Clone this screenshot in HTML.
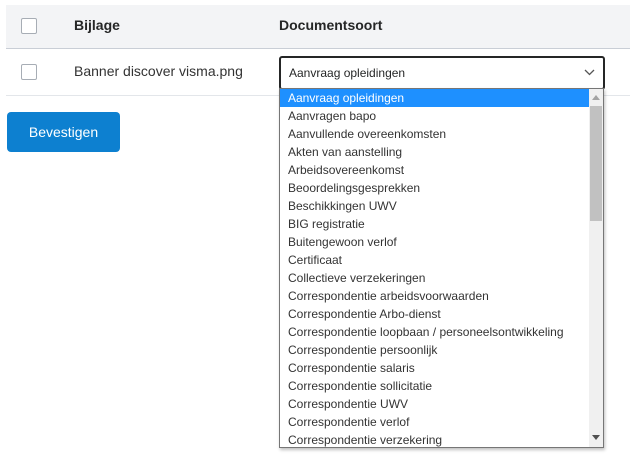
<!DOCTYPE html>
<html><head><style>
body{margin:0;width:630px;height:462px;background:#fff;font-family:"Liberation Sans",sans-serif;position:relative;overflow:hidden;color:#252626}
.hdr{position:absolute;left:6px;top:5px;width:624px;height:43px;background:#f3f4f6;border-bottom:1px solid #c9ced6}
.cb{position:absolute;width:14px;height:14px;border:1px solid #a7adb5;border-radius:2px;background:#fff}
.t{position:absolute;white-space:nowrap}
.rowline{position:absolute;left:6px;top:95px;width:624px;height:1px;background:#e3e6ea}
.btn{position:absolute;left:7px;top:112px;width:113px;height:40px;background:#0d80d0;border-radius:4px;color:#fff;font-size:14px;line-height:40px;text-align:center}
.sel{position:absolute;left:279px;top:56px;width:322px;height:30px;border:2px solid #252626;border-radius:3px;background:#fff;font-size:12px;line-height:30px}
.list{position:absolute;left:279px;top:88px;width:325px;height:360px;border:1px solid #767676;box-sizing:border-box;background:#fff;box-shadow:1px 2px 3px rgba(0,0,0,.25);font-size:12px}
.it{height:18px;line-height:18px;padding-left:8px;white-space:nowrap;color:#333;width:302px}
.it.a{background:#1e90ff;color:#fff}
.sb{position:absolute;right:0;top:0;width:14px;height:358px;background:#f0f0f0}
.th{position:absolute;left:1px;top:17px;width:12px;height:115px;background:#c1c1c1}
</style></head><body>
<div class="hdr"></div>
<div class="cb" style="left:21px;top:18px"></div>
<div class="t" style="left:74px;top:17px;font-weight:bold;font-size:14px">Bijlage</div>
<div class="t" style="left:279px;top:17px;font-weight:bold;font-size:14px">Documentsoort</div>
<div class="cb" style="left:21px;top:64px"></div>
<div class="t" style="left:74px;top:63px;font-size:14px;color:#333">Banner discover visma.png</div>
<div class="rowline"></div>
<div class="sel"><span style="padding-left:8px">Aanvraag opleidingen</span>
<svg style="position:absolute;right:8px;top:11px" width="11" height="7" viewBox="0 0 11 7"><path d="M1 1l4.5 4.5L10 1" fill="none" stroke="#555" stroke-width="1.3"/></svg></div>
<div class="btn">Bevestigen</div>
<div class="list">
<div class="it a">Aanvraag opleidingen</div>
<div class="it">Aanvragen bapo</div>
<div class="it">Aanvullende overeenkomsten</div>
<div class="it">Akten van aanstelling</div>
<div class="it">Arbeidsovereenkomst</div>
<div class="it">Beoordelingsgesprekken</div>
<div class="it">Beschikkingen UWV</div>
<div class="it">BIG registratie</div>
<div class="it">Buitengewoon verlof</div>
<div class="it">Certificaat</div>
<div class="it">Collectieve verzekeringen</div>
<div class="it">Correspondentie arbeidsvoorwaarden</div>
<div class="it">Correspondentie Arbo-dienst</div>
<div class="it">Correspondentie loopbaan / personeelsontwikkeling</div>
<div class="it">Correspondentie persoonlijk</div>
<div class="it">Correspondentie salaris</div>
<div class="it">Correspondentie sollicitatie</div>
<div class="it">Correspondentie UWV</div>
<div class="it">Correspondentie verlof</div>
<div class="it">Correspondentie verzekering</div>
<div class="sb"><svg style="position:absolute;left:3px;top:6px" width="8" height="5"><path d="M0 5L4 0L8 5Z" fill="#a3a3a3"/></svg><div class="th"></div><svg style="position:absolute;left:3px;top:346px" width="8" height="5"><path d="M0 0L4 5L8 0Z" fill="#505050"/></svg></div>
</div>
</body></html>
